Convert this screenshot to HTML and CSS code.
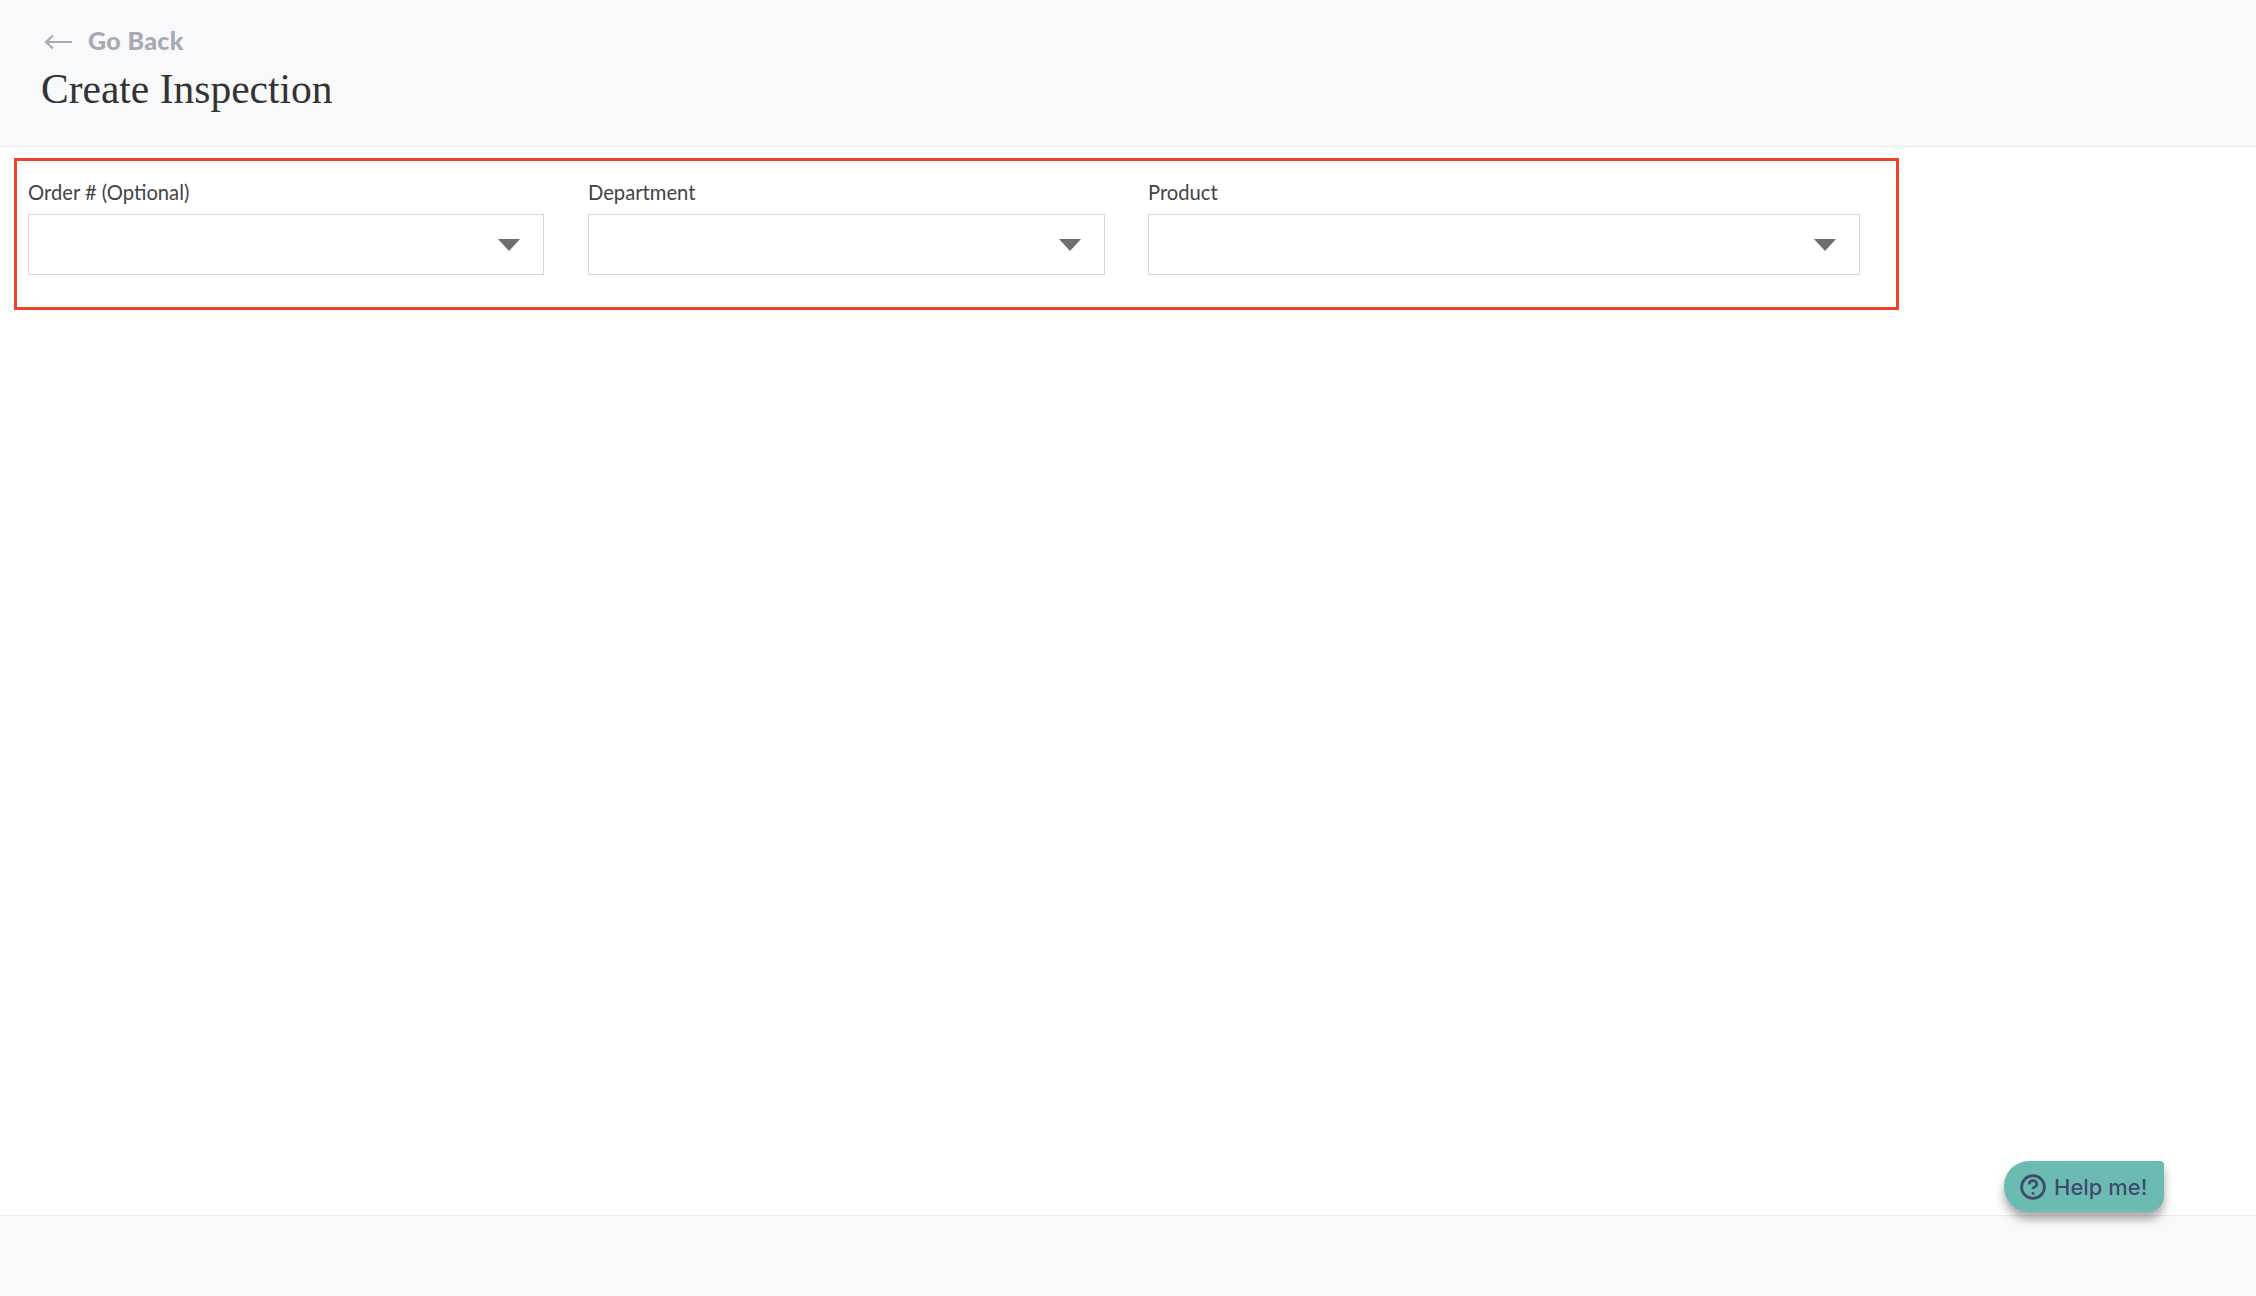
FILE: index.html
```html
<!DOCTYPE html>
<html lang="en">
<head>
  <meta charset="UTF-8">
  <title>Create Inspection</title>
  <link rel="stylesheet" href="styles.css">
</head>
<body>
  <header class="page-header">
    <a class="back-link" href="#">
      <svg class="back-arrow" width="28" height="16" viewBox="0 0 28 16"><path d="M28 8H2M9 1.500 2 8l7 6.500" fill="none" stroke="currentColor" stroke-width="2.200"/></svg>
      <span>Go Back</span>
    </a>
    <h1>Create Inspection</h1>
  </header>

  <main class="content">
    <form class="filter-box">
      <div class="field">
        <label>Order # (Optional)</label>
        <div class="select"><span class="caret"></span></div>
      </div>
      <div class="field">
        <label>Department</label>
        <div class="select"><span class="caret"></span></div>
      </div>
      <div class="field">
        <label>Product</label>
        <div class="select"><span class="caret"></span></div>
      </div>
    </form>
  </main>

  <footer class="page-footer"></footer>

  <button class="help-btn">
    <svg width="26" height="26" viewBox="0 0 26 26" fill="none" stroke="currentColor" stroke-width="2.800">
      <circle cx="13" cy="13" r="11.400"/>
      <path d="M9.200 10.300a3.800 3.800 0 0 1 7.600 0c0 2.500-3.800 2.700-3.800 4.800"/>
      <circle cx="13" cy="19.200" r="1.500" fill="currentColor" stroke="none"/>
    </svg>
    <span>Help me!</span>
  </button>
</body>
</html>
```

FILE: styles.css
```css
* {
  box-sizing: border-box;
  margin: 0;
  padding: 0;
}

html, body {
  height: 100%;
}

body {
  display: flex;
  flex-direction: column;
  min-height: 1296px;
  background: #fff;
  color: #333;
  font-family: "Lato", "Open Sans", sans-serif;
}

.page-header {
  height: 147px;
  padding: 26px 41px 0;
  background: #f8f9fb;
  border-bottom: 1px solid #eaebf0;
}

.back-link {
  display: flex;
  align-items: center;
  gap: 16px;
  height: 28px;
  margin-left: 3px;
  color: #a9a9b3;
  font-size: 25px;
  font-weight: 900;
  letter-spacing: 0.35px;
  text-decoration: none;
}

.back-arrow {
  margin-top: 4px;
}

h1 {
  margin-top: 11px;
  color: #333;
  font-family: "Liberation Serif", serif;
  font-size: 41.500px;
  font-weight: 400;
  line-height: 48px;
}

.content {
  flex: 1;
  padding: 11px 0 0 14px;
}

.filter-box {
  display: grid;
  grid-template-columns: 516px 517px 711px;
  column-gap: 44px;
  width: 1885px;
  height: 152px;
  padding: 19px 0 0 11px;
  border: 3px solid #ee4326;
}

.field:last-child {
  margin-left: -1px;
}

.field label {
  display: block;
  height: 34px;
  color: #444;
  font-size: 20.200px;
  line-height: 24px;
}

.select {
  display: flex;
  align-items: center;
  justify-content: flex-end;
  height: 61px;
  padding-right: 23px;
  border: 1px solid #d6d6d6;
  background: #fff;
}

.caret {
  width: 0;
  height: 0;
  border-left: 11px solid transparent;
  border-right: 11px solid transparent;
  border-top: 12px solid #6e6e6e;
}

.page-footer {
  height: 81px;
  background: #f8f9fb;
  border-top: 1px solid #eaebf0;
}

.help-btn {
  position: fixed;
  left: 2004px;
  top: 1161px;
  display: flex;
  align-items: center;
  gap: 8px;
  width: 160px;
  height: 51px;
  padding-left: 16px;
  border: none;
  border-radius: 25px 4px 16px 25px;
  background: #6cbbb3;
  box-shadow: 0 7px 10px rgba(60, 60, 60, 0.45);
  color: #3f4b6b;
  font-family: "Inter", sans-serif;
  font-size: 22px;
  font-weight: 500;
}
```
